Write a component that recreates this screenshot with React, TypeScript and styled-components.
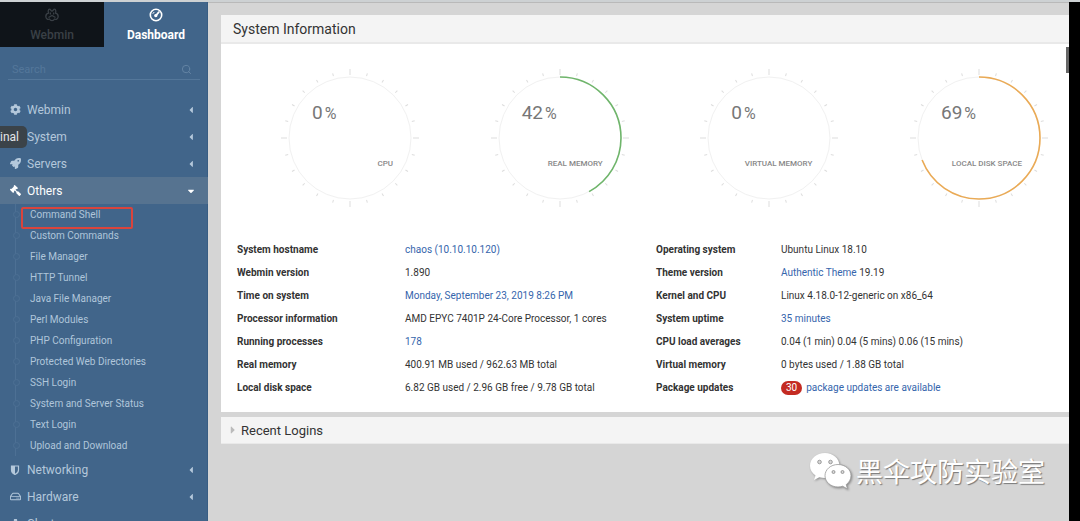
import React from "react";
import styled, { createGlobalStyle } from "styled-components";
import { FaCog, FaRocket, FaGavel, FaRegHdd, FaCaretLeft, FaCaretDown, FaWrench, FaSitemap, FaCaretRight } from "react-icons/fa";
import { FiSearch } from "react-icons/fi";
import type { IconType } from "react-icons";

const GlobalStyle = createGlobalStyle`
  * { box-sizing: border-box; }
  html, body, #root { height: 100%; }
  body {
    margin: 0;
    overflow: hidden;
    background: #d5d5d5;
    color: #333;
    font-family: Roboto, "Noto Sans CJK SC", sans-serif;
    font-size: 11px;
  }
  a { color: #3565ac; text-decoration: none; }
  button { font: inherit; border: 0; padding: 0; cursor: pointer; }
`;

const Page = styled.div`
  display: flex;
  height: 100vh;
  overflow: hidden;
  border-top: 2px solid #cdd1d3;
`;

const Sidebar = styled.nav`
  flex: none;
  width: 208px;
  background: #41658a;
  box-shadow: inset -1px 0 #385d83;
`;

const Tabs = styled.div`
  display: flex;
  height: 45px;
`;

const Tab = styled.button<{ $active?: boolean }>`
  flex: 1;
  display: flex;
  flex-direction: column;
  align-items: center;
  gap: 5px;
  padding-top: 6px;
  line-height: 16px;
  font-size: 12px;
  font-weight: ${(p) => (p.$active ? 700 : 500)};
  color: ${(p) => (p.$active ? "#fff" : "#3a4046")};
  background: ${(p) => (p.$active ? "transparent" : "#0f1419")};
`;

const SearchBox = styled.label`
  display: flex;
  align-items: center;
  height: 20px;
  margin: 13px 8px 16px;
  padding: 0 8px 0 4px;
  border-bottom: 1px solid #54779a;
  color: #6686a5;
`;

const SearchInput = styled.input`
  flex: 1;
  min-width: 0;
  border: 0;
  padding: 0;
  outline: 0;
  background: transparent;
  font: inherit;
  &::placeholder { color: #54779a; opacity: 1; }
`;

const MenuRow = styled.button<{ $open?: boolean }>`
  display: flex;
  align-items: center;
  gap: 6px;
  width: 100%;
  height: 27px;
  padding: 0 12px 0 10px;
  text-align: left;
  font-size: 12px;
  color: ${(p) => (p.$open ? "#fff" : "#b4c8db")};
  background: ${(p) => (p.$open ? "#567390" : "transparent")};
  svg { flex: none; }
`;

const MenuLabel = styled.span`
  flex: 1;
`;

const FlippedGavel = styled(FaGavel)`
  transform: scaleX(-1);
`;

const SubList = styled.ul`
  list-style: none;
  margin: 0 0 0 15px;
  padding: 0;
  border-left: 1px solid #4d7094;
`;

const SubItem = styled.li`
  display: flex;
  align-items: center;
  height: 21px;
  &::before {
    content: "";
    width: 5px;
    height: 5px;
    margin-left: -3px;
    margin-right: 12px;
    border: 1px solid #4d7094;
    border-radius: 50%;
    background: #41658a;
  }
  &::before { margin-right: 10px; }
`;

const SubLink = styled.a`
  color: #b0c6da;
  font-size: 10px;
  line-height: 21px;
`;

const Highlight = styled.div`
  position: absolute;
  left: 21px;
  top: 207px;
  width: 112px;
  height: 22px;
  border: 2px solid #d9443c;
  border-radius: 2px;
`;

const Tooltip = styled.div`
  position: absolute;
  left: 0;
  top: 126px;
  width: 27px;
  height: 22px;
  overflow: hidden;
  border-radius: 0 5px 5px 0;
  background: #3b4349;
  color: #e4e6e8;
  font-size: 12px;
  line-height: 22px;
`;

const Main = styled.main`
  flex: 1;
  min-width: 0;
  padding: 13px 0 0 13px;
  box-shadow: inset 0 1px #b9b9b9;
`;

const Panel = styled.section`
  margin-bottom: 5px;
  background: #fff;
`;

const PanelHead = styled.h2`
  display: flex;
  align-items: center;
  height: 29px;
  margin: 0;
  padding-left: 12px;
  border-bottom: 2px solid #e9e9e9;
  background: #f4f4f4;
  font-size: 14px;
  font-weight: 400;
`;

const FoldHead = styled(PanelHead)`
  gap: 2px;
  height: 27px;
  padding-left: 6px;
  border-bottom-width: 1px;
  font-size: 13px;
  svg { color: #bbb; }
`;

const Gauges = styled.div`
  display: flex;
  justify-content: space-between;
  padding: 24px 20px 0 59px;
`;

const Gauge = styled.figure`
  display: grid;
  width: 140px;
  height: 140px;
  margin: 0;
  > * { grid-area: 1 / 1; }
`;

const GaugeFace = styled.figcaption`
  display: flex;
  flex-direction: column;
  justify-content: space-between;
  padding: 34px 27px 39px 32px;
`;

const Percent = styled.span`
  display: flex;
  align-items: baseline;
  gap: 2px;
  font-size: 19px;
  line-height: 22px;
  color: #777;
`;

const PercentSign = styled.span`
  font-size: 16px;
`;

const GaugeLabel = styled.span`
  align-self: flex-end;
  white-space: nowrap;
  font-size: 8px;
  line-height: 10px;
  font-weight: 500;
  color: #888;
`;

const InfoTable = styled.table`
  width: calc(100% - 53px);
  margin: 30px 0 0 16px;
  border-collapse: collapse;
  table-layout: fixed;
  font-size: 10px;
  th, td {
    height: 23px;
    padding: 0;
    text-align: left;
    white-space: nowrap;
  }
  th { font-weight: 700; }
`;

const PanelBody = styled.div`
  padding-bottom: 13px;
`;

const Col = styled.col<{ $width?: number }>`
  width: ${(p) => (p.$width ? `${p.$width}px` : "auto")};
`;

const Badge = styled.span`
  display: inline-block;
  padding: 0 5px;
  margin-right: 4px;
  border-radius: 7px;
  background: #c42b22;
  color: #fff;
  line-height: 14px;
`;

const Edge = styled.aside`
  flex: none;
  width: 11px;
  margin-top: -2px;
  background: #000;
`;

const ScrollThumb = styled.div`
  position: absolute;
  right: 11px;
  top: 47px;
  width: 3px;
  height: 26px;
  background: #666;
`;

const Watermark = styled.div`
  position: absolute;
  right: 35px;
  top: 452px;
  display: flex;
  align-items: center;
  gap: 4px;
  color: #fff;
  font-family: "Noto Sans CJK SC", sans-serif;
  font-size: 27px;
  line-height: 38px;
  text-shadow: 1px 1px 1px #777;
  svg { filter: drop-shadow(1px 1px 1px #888); }
`;

const WebminLogo = () => (
  <svg width="14" height="14" viewBox="0 0 14 14" fill="none" stroke="currentColor" strokeWidth="1.3" strokeLinejoin="round">
    <path d="M4.5 1.2C3 1.2 3 4 3.6 5.2C1.5 5.6 .7 7.2 .9 9c.2 2 2.2 2.8 3.6 2C5.5 13.2 8.5 13.2 9.5 11c1.4.8 3.4 0 3.6-2C13.3 7.2 12.5 5.6 10.4 5.2c.6-1.2.6-4-.9-4C8.2 1.2 8.3 3 7 3S5.8 1.2 4.5 1.2Z" />
    <path d="M5.4 4.5v2M8.6 4.5v2M3.5 9.5 7 7.5l3.5 2" />
  </svg>
);

const DashLogo = () => (
  <svg width="14" height="14" viewBox="0 0 14 14" fill="none" stroke="currentColor" strokeWidth="1.6" strokeLinecap="round">
    <circle cx="7" cy="7" r="5.7" />
    <path d="M7 7.5 9.8 4.2" strokeWidth="1.8" />
    <circle cx="6.8" cy="7.6" r=".9" fill="currentColor" />
    <path d="M4 5.5 5 4.3" strokeWidth="1" />
  </svg>
);

const ShieldHalf = () => (
  <svg width="11" height="10" viewBox="0 0 11 10">
    <path d="M1.5 1h7v4C8.5 7.3 6.8 8.7 5 9.5 3.2 8.7 1.5 7.3 1.5 5Z" fill="none" stroke="currentColor" strokeWidth="1.2" />
    <path d="M1.5 1H5v8.5C3.2 8.7 1.5 7.3 1.5 5Z" fill="currentColor" />
  </svg>
);

const WeChat = () => (
  <svg width="43" height="38" viewBox="0 0 43 38">
    <path fill="#fff" d="M16 1C7.5 1 1 6.7 1 13.8c0 4 2.1 7.5 5.5 9.8L5 28l5.3-2.7c1.8.5 3.7.8 5.7.8C24.3 26 30.5 20.6 30.5 13.7 30.5 6.7 24.2 1 16 1Z" />
    <path fill="#fff" stroke="#999" strokeWidth=".8" d="M29 12.5C21.8 12.5 16 17.5 16 23.7S21.8 35 29 35c1.7 0 3.3-.3 4.7-.8L38.5 37l-1.3-4.4C40 30.5 42 27.3 42 23.7c0-6.2-5.8-11.2-13-11.2Z" />
    <g fill="#d8d8d8" stroke="#888" strokeWidth=".8">
      <circle cx="10.5" cy="10" r="1.8" /><circle cx="21.5" cy="10" r="1.8" />
      <circle cx="24.5" cy="20" r="1.5" /><circle cx="33.5" cy="20" r="1.5" />
    </g>
  </svg>
);

const R = 61;
const LENGTH = 2 * Math.PI * R;

function Dial({ value, label, color }: { value: number; label: string; color: string }) {
  return (
    <Gauge>
      <svg width="140" height="140" viewBox="-70 -70 140 140" fill="none">
        {Array.from({ length: 24 }, (_, i) => (
          <line key={i} y1={i % 6 ? -64 : -63} y2={i % 6 ? -67 : -69} stroke="#ddd" transform={`rotate(${i * 15})`} />
        ))}
        <circle r={R} stroke="#f1f1f1" />
        {value > 0 && (
          <circle r={R} stroke={color} strokeWidth="1.6" strokeDasharray={`${(LENGTH * value) / 100} ${LENGTH}`} transform="rotate(-90)" />
        )}
      </svg>
      <GaugeFace>
        <Percent>{value}<PercentSign>%</PercentSign></Percent>
        <GaugeLabel>{label}</GaugeLabel>
      </GaugeFace>
    </Gauge>
  );
}

function MenuItem({ icon: Icon, label, open }: { icon: IconType | React.ElementType; label: string; open?: boolean }) {
  return (
    <MenuRow $open={open} aria-expanded={!!open}>
      <Icon size={11} />
      <MenuLabel>{label}</MenuLabel>
      {open ? <FaCaretDown size={10} /> : <FaCaretLeft size={10} />}
    </MenuRow>
  );
}

const others = [
  "Command Shell", "Custom Commands", "File Manager", "HTTP Tunnel", "Java File Manager", "Perl Modules",
  "PHP Configuration", "Protected Web Directories", "SSH Login", "System and Server Status", "Text Login", "Upload and Download",
];

const link = (text: string) => <a href="#">{text}</a>;

const rows: [string, React.ReactNode, string, React.ReactNode][] = [
  ["System hostname", link("chaos (10.10.10.120)"), "Operating system", "Ubuntu Linux 18.10"],
  ["Webmin version", "1.890", "Theme version", <>{link("Authentic Theme")} 19.19</>],
  ["Time on system", link("Monday, September 23, 2019 8:26 PM"), "Kernel and CPU", "Linux 4.18.0-12-generic on x86_64"],
  ["Processor information", "AMD EPYC 7401P 24-Core Processor, 1 cores", "System uptime", link("35 minutes")],
  ["Running processes", link("178"), "CPU load averages", "0.04 (1 min) 0.04 (5 mins) 0.06 (15 mins)"],
  ["Real memory", "400.91 MB used / 962.63 MB total", "Virtual memory", "0 bytes used / 1.88 GB total"],
  ["Local disk space", "6.82 GB used / 2.96 GB free / 9.78 GB total", "Package updates", <><Badge>30</Badge>{link("package updates are available")}</>],
];

export default function App() {
  return (
    <>
      <GlobalStyle />
      <Page>
        <Sidebar>
          <Tabs>
            <Tab><WebminLogo />Webmin</Tab>
            <Tab $active><DashLogo />Dashboard</Tab>
          </Tabs>
          <SearchBox>
            <SearchInput type="text" placeholder="Search" aria-label="Search" />
            <FiSearch size={11} />
          </SearchBox>
          <MenuItem icon={FaCog} label="Webmin" />
          <MenuItem icon={FaWrench} label="System" />
          <MenuItem icon={FaRocket} label="Servers" />
          <MenuItem icon={FlippedGavel} label="Others" open />
          <SubList>
            {others.map((name) => (
              <SubItem key={name}><SubLink href="#">{name}</SubLink></SubItem>
            ))}
          </SubList>
          <MenuItem icon={ShieldHalf} label="Networking" />
          <MenuItem icon={FaRegHdd} label="Hardware" />
          <MenuItem icon={FaSitemap} label="Cluster" />
        </Sidebar>
        <Main>
          <Panel>
            <PanelHead>System Information</PanelHead>
            <PanelBody>
              <Gauges>
                <Dial value={0} label="CPU" color="#6fb56b" />
                <Dial value={42} label="REAL MEMORY" color="#6fb56b" />
                <Dial value={0} label="VIRTUAL MEMORY" color="#6fb56b" />
                <Dial value={69} label="LOCAL DISK SPACE" color="#eaaa55" />
              </Gauges>
              <InfoTable>
                <colgroup><Col $width={168} /><Col /><Col $width={125} /><Col /></colgroup>
                <tbody>
                  {rows.map(([a, b, c, d]) => (
                    <tr key={a}><th scope="row">{a}</th><td>{b}</td><th scope="row">{c}</th><td>{d}</td></tr>
                  ))}
                </tbody>
              </InfoTable>
            </PanelBody>
          </Panel>
          <Panel>
            <FoldHead><FaCaretRight size={12} />Recent Logins</FoldHead>
          </Panel>
        </Main>
        <Edge />
      </Page>
      <Tooltip>inal</Tooltip>
      <Highlight />
      <ScrollThumb />
      <Watermark><WeChat />黑伞攻防实验室</Watermark>
    </>
  );
}
